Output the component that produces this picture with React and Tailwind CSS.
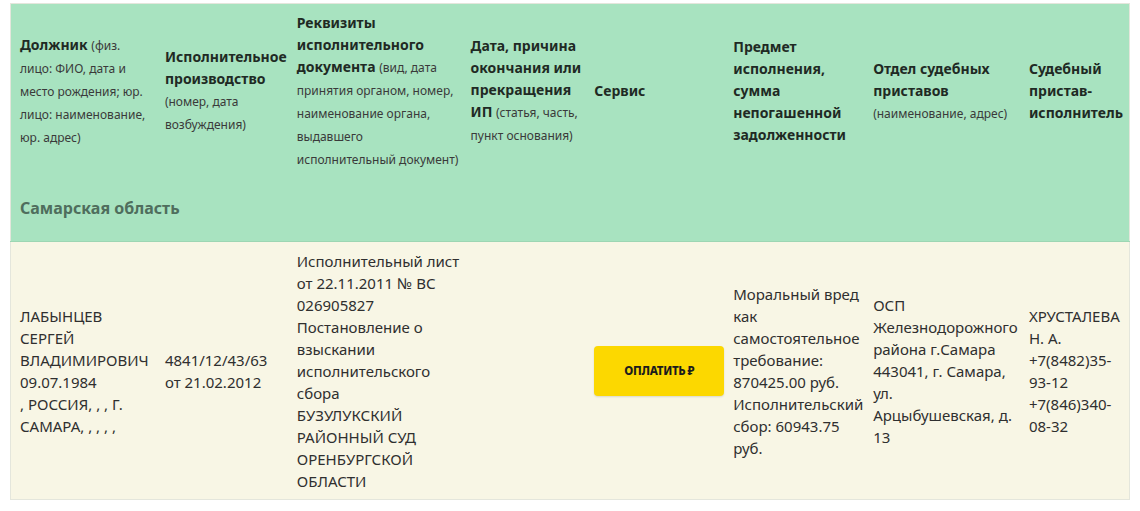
import React from 'react';

// one row per line, as on the page
const Lines = ({ items }) => (
  <>
    {items.map((t, i) => (
      <span key={i} className="block whitespace-nowrap">
        {t}
      </span>
    ))}
  </>
);

const Note = ({ children }) => (
  <span className="text-[12px] font-normal text-[#3a3a3a]">{children}</span>
);

const widths = [146, 132, 174, 124, 138, 140, 156, 110];

export default function App() {
  return (
    <div className="min-h-screen bg-white px-[10px] pt-[3px]" style={{ fontFamily: '"Noto Sans", "Open Sans", sans-serif' }}>
      <table className="table-fixed border-collapse border border-[#e4e6dc] text-left">
        <colgroup>
          {widths.map((w, i) => (
            <col key={i} style={{ width: w }} />
          ))}
        </colgroup>
        <thead className="bg-[#a8e3c0] text-[14px] font-bold leading-[22px] text-[#1f2a24]">
          <tr>
            <th className="h-[175px] pl-[9px] align-middle font-bold">
              <span className="block whitespace-nowrap">
                Должник <Note>(физ.</Note>
              </span>
              <span className="block whitespace-nowrap"><Note>лицо: ФИО, дата и</Note></span>
              <span className="block whitespace-nowrap"><Note>место рождения; юр.</Note></span>
              <span className="block whitespace-nowrap"><Note>лицо: наименование,</Note></span>
              <span className="block whitespace-nowrap"><Note>юр. адрес)</Note></span>
            </th>
            <th className="pl-[9px] align-middle font-bold">
              <Lines items={['Исполнительное', 'производство']} />
              <span className="block whitespace-nowrap"><Note>(номер, дата</Note></span>
              <span className="block whitespace-nowrap"><Note>возбуждения)</Note></span>
            </th>
            <th className="pl-[9px] align-middle font-bold">
              <Lines items={['Реквизиты', 'исполнительного']} />
              <span className="block whitespace-nowrap">
                документа <Note>(вид, дата</Note>
              </span>
              <span className="block whitespace-nowrap"><Note>принятия органом, номер,</Note></span>
              <span className="block whitespace-nowrap"><Note>наименование органа,</Note></span>
              <span className="block whitespace-nowrap"><Note>выдавшего</Note></span>
              <span className="block whitespace-nowrap"><Note>исполнительный документ)</Note></span>
            </th>
            <th className="pl-[9px] align-middle font-bold">
              <Lines items={['Дата, причина', 'окончания или', 'прекращения']} />
              <span className="block whitespace-nowrap">
                ИП <Note>(статья, часть,</Note>
              </span>
              <span className="block whitespace-nowrap"><Note>пункт основания)</Note></span>
            </th>
            <th className="pl-[9px] align-middle font-bold">Сервис</th>
            <th className="pl-[9px] align-middle font-bold">
              <Lines items={['Предмет', 'исполнения,', 'сумма', 'непогашенной', 'задолженности']} />
            </th>
            <th className="pl-[9px] align-middle font-bold">
              <Lines items={['Отдел судебных', 'приставов']} />
              <span className="block whitespace-nowrap"><Note>(наименование, адрес)</Note></span>
            </th>
            <th className="pl-[9px] align-middle font-bold">
              <Lines items={['Судебный', 'пристав-', 'исполнитель']} />
            </th>
          </tr>
          <tr>
            <th colSpan={8} className="h-[63px] border-b border-[#9dd6b3] pb-[4px] pl-[9px] align-middle text-[16px] font-bold text-[#4f6e5d]">
              Самарская область
            </th>
          </tr>
        </thead>
        <tbody className="bg-[#f8f6e5] text-[15px] leading-[22px] text-[#2f2f2f]">
          <tr>
            <td className="h-[258px] pl-[9px] align-middle">
              <Lines items={['ЛАБЫНЦЕВ', 'СЕРГЕЙ', 'ВЛАДИМИРОВИЧ', '09.07.1984', ', РОССИЯ, , , Г.', 'САМАРА, , , , ,']} />
            </td>
            <td className="pl-[9px] align-middle">
              <Lines items={['4841/12/43/63', 'от 21.02.2012']} />
            </td>
            <td className="pl-[9px] align-middle">
              <Lines
                items={[
                  'Исполнительный лист',
                  'от 22.11.2011 № ВС',
                  '026905827',
                  'Постановление о',
                  'взыскании',
                  'исполнительского',
                  'сбора',
                  'БУЗУЛУКСКИЙ',
                  'РАЙОННЫЙ СУД',
                  'ОРЕНБУРГСКОЙ',
                  'ОБЛАСТИ',
                ]}
              />
            </td>
            <td className="pl-[9px] align-middle"></td>
            <td className="pl-[9px] align-middle">
              <button className="flex h-[50px] w-[130px] items-center justify-center rounded-[4px] bg-[#fcd800] text-[11.5px] font-extrabold tracking-tight text-[#1c1c1c] shadow-[0_1px_2px_rgba(0,0,0,0.12)]">
                ОПЛАТИТЬ<span className="ml-[2px]">₽</span>
              </button>
            </td>
            <td className="pl-[9px] align-middle">
              <Lines
                items={[
                  'Моральный вред',
                  'как',
                  'самостоятельное',
                  'требование:',
                  '870425.00 руб.',
                  'Исполнительский',
                  'сбор: 60943.75',
                  'руб.',
                ]}
              />
            </td>
            <td className="pl-[9px] align-middle">
              <Lines
                items={[
                  'ОСП',
                  'Железнодорожного',
                  'района г.Самара',
                  '443041, г. Самара,',
                  'ул.',
                  'Арцыбушевская, д.',
                  '13',
                ]}
              />
            </td>
            <td className="pl-[9px] align-middle">
              <Lines items={['ХРУСТАЛЕВА', 'Н. А.', '+7(8482)35-', '93-12', '+7(846)340-', '08-32']} />
            </td>
          </tr>
        </tbody>
      </table>
    </div>
  );
}
